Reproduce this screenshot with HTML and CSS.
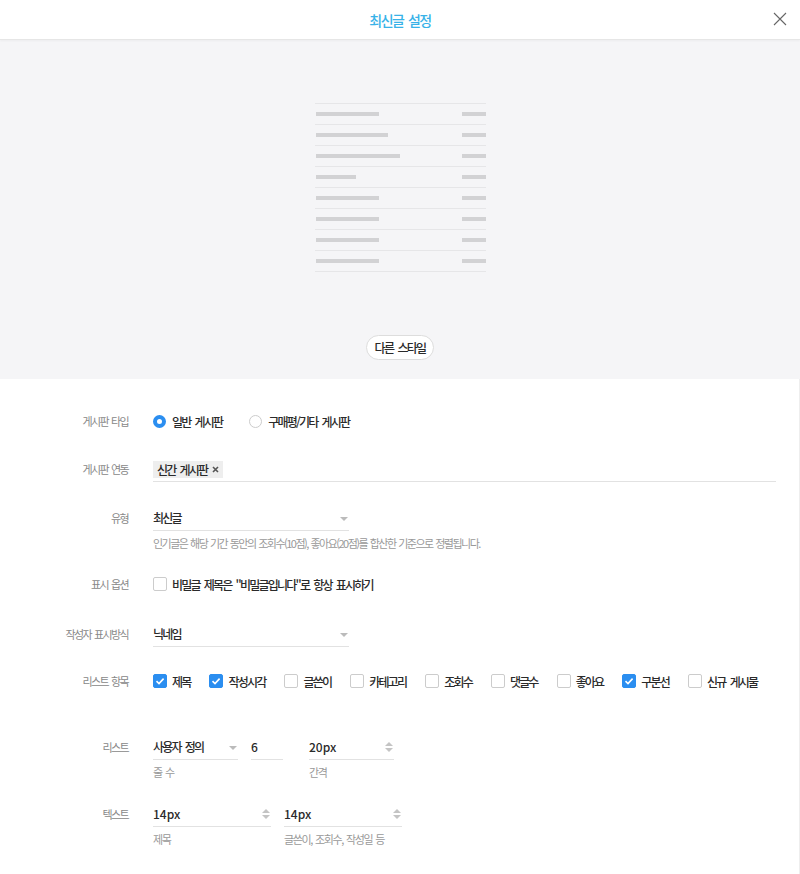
FILE: index.html
```html
<!DOCTYPE html>
<html lang="ko">
<head>
    <meta charset="UTF-8" />
    <meta name="viewport" content="width=device-width, initial-scale=1.0">
    <title>최신글 설정</title>
    <link rel="stylesheet" href="styles.css">
</head>
<body>
    <div class="modal">
        <header class="modal-header">
            <h1>최신글 설정</h1>
            <button class="close-btn" type="button" aria-label="닫기">
                <svg width="14" height="14" viewBox="0 0 14 14">
                    <path d="M1 1L13 13M13 1L1 13" stroke="#666" stroke-width="1.1" fill="none" />
                </svg>
            </button>
        </header>

        <section class="preview">
            <ul class="preview-list">
                <li><span class="bar" style="width: 63px"></span><span class="bar bar-right"></span></li>
                <li><span class="bar" style="width: 72px"></span><span class="bar bar-right"></span></li>
                <li><span class="bar" style="width: 84px"></span><span class="bar bar-right"></span></li>
                <li><span class="bar" style="width: 40px"></span><span class="bar bar-right"></span></li>
                <li><span class="bar" style="width: 63px"></span><span class="bar bar-right"></span></li>
                <li><span class="bar" style="width: 63px"></span><span class="bar bar-right"></span></li>
                <li><span class="bar" style="width: 63px"></span><span class="bar bar-right"></span></li>
                <li><span class="bar" style="width: 63px"></span><span class="bar bar-right"></span></li>
            </ul>
            <button class="style-btn" type="button">다른 스타일</button>
        </section>

        <form class="settings">
            <div class="row row-wide">
                <label class="row-label">게시판 타입</label>
                <div class="row-body options">
                    <label class="radio checked"><span class="radio-mark"></span>일반 게시판</label>
                    <label class="radio"><span class="radio-mark"></span>구매평/기타 게시판</label>
                </div>
            </div>

            <div class="row row-wide">
                <label class="row-label">게시판 연동</label>
                <div class="row-body">
                    <div class="field tag-field">
                        <span class="tag">신간 게시판
                            <svg class="tag-x" width="7" height="7" viewBox="0 0 7 7">
                                <path d="M1 1L6 6M6 1L1 6" stroke="#555" stroke-width="1.6" fill="none" />
                            </svg>
                        </span>
                    </div>
                </div>
            </div>

            <div class="row row-help">
                <label class="row-label">유형</label>
                <div class="row-body">
                    <div class="field select w-196">최신글<span class="caret"></span></div>
                    <p class="help">인기글은 해당 기간 동안의 조회수(10점), 좋아요(20점)를 합산한 기준으로 정렬됩니다.</p>
                </div>
            </div>

            <div class="row row-option">
                <label class="row-label">표시 옵션</label>
                <div class="row-body options">
                    <label class="check"><span class="check-mark"></span>비밀글 제목은 "비밀글입니다"로 항상 표시하기</label>
                </div>
            </div>

            <div class="row">
                <label class="row-label">작성자 표시방식</label>
                <div class="row-body">
                    <div class="field select w-196">닉네임<span class="caret"></span></div>
                </div>
            </div>

            <div class="row">
                <label class="row-label">리스트 항목</label>
                <div class="row-body options list-items">
                    <label class="check checked"><span class="check-mark"></span>제목</label>
                    <label class="check checked"><span class="check-mark"></span>작성시각</label>
                    <label class="check"><span class="check-mark"></span>글쓴이</label>
                    <label class="check"><span class="check-mark"></span>카테고리</label>
                    <label class="check"><span class="check-mark"></span>조회수</label>
                    <label class="check"><span class="check-mark"></span>댓글수</label>
                    <label class="check"><span class="check-mark"></span>좋아요</label>
                    <label class="check checked"><span class="check-mark"></span>구분선</label>
                    <label class="check"><span class="check-mark"></span>신규 게시물</label>
                </div>
            </div>

            <div class="row row-spaced">
                <label class="row-label">리스트</label>
                <div class="row-body groups">
                    <div class="group">
                        <div class="inline-fields">
                            <div class="field select w-85">사용자 정의<span class="caret"></span></div>
                            <div class="field num w-32">6</div>
                        </div>
                        <span class="caption">줄 수</span>
                    </div>
                    <div class="group">
                        <div class="field spin num w-85">20px<span class="spinner"></span></div>
                        <span class="caption">간격</span>
                    </div>
                </div>
            </div>

            <div class="row">
                <label class="row-label">텍스트</label>
                <div class="row-body groups tight">
                    <div class="group">
                        <div class="field spin num w-118">14px<span class="spinner"></span></div>
                        <span class="caption">제목</span>
                    </div>
                    <div class="group">
                        <div class="field spin num w-118">14px<span class="spinner"></span></div>
                        <span class="caption">글쓴이, 조회수, 작성일 등</span>
                    </div>
                </div>
            </div>
        </form>
    </div>
</body>
</html>
```

FILE: styles.css
```css
* {
    box-sizing: border-box;
}

body {
    margin: 0;
    font-family: "Noto Sans CJK KR", "Noto Sans", sans-serif;
    color: #2a2a2a;
    background-color: white;
}

.modal {
    width: 800px;
}

.modal-header {
    position: relative;
    height: 40px;
    border-bottom: 1px solid #e6e6e6;
    box-shadow: 0 1px 2px rgba(0,0,0,0.04);
    display: flex;
    align-items: center;
    justify-content: center;
}

.modal-header h1 {
    margin: 0;
    font-size: 14px;
    font-weight: 500;
    color: #38b2e8;
    letter-spacing: -1.5px;
    word-spacing: 2px;
}

.close-btn {
    position: absolute;
    right: 13px;
    top: 12px;
    padding: 0;
    border: none;
    background: none;
    width: 14px;
    height: 14px;
    cursor: pointer;
}

.close-btn svg {
    display: block;
}

/* 미리보기 */
.preview {
    background-color: #f5f5f7;
    height: 339px;
    padding-top: 63px;
    display: flex;
    flex-direction: column;
    align-items: center;
}

.preview-list {
    list-style: none;
    margin: 0 0 0 1px;
    padding: 0;
    width: 171px;
    border-top: 1px solid #e6e6e8;
}

.preview-list li {
    height: 21px;
    border-bottom: 1px solid #e6e6e8;
    display: flex;
    align-items: center;
    justify-content: space-between;
    padding-left: 1px;
}

.bar {
    display: block;
    height: 4px;
    background-color: #d2d2d4;
}

.bar-right {
    width: 24px;
}

.style-btn {
    margin-top: 63px;
    height: 25px;
    padding: 0 8px;
    border: 1px solid #ddd;
    border-radius: 13px;
    background-color: white;
    font-family: inherit;
    font-size: 12px;
    font-weight: 500;
    letter-spacing: -1.7px;
    word-spacing: 2.5px;
    color: #2a2a2a;
    cursor: pointer;
}

/* 설정 폼 */
.settings {
    padding: 30px 0 27px;
    border-right: 1px solid #eee;
}

.row {
    display: flex;
    align-items: flex-start;
    margin-bottom: 22px;
}

.row-wide {
    margin-bottom: 24px;
}

.row-help {
    margin-bottom: 21px;
}

.row-option {
    margin-bottom: 26px;
}

.row-spaced {
    margin-top: 42px;
}

.row-label {
    width: 128px;
    flex-shrink: 0;
    margin-right: 25px;
    text-align: right;
    font-size: 11px;
    line-height: 24px;
    color: #888;
    letter-spacing: -1.6px;
    word-spacing: 1.5px;
}

.row-body {
    flex: 1;
    font-size: 12px;
    font-weight: 500;
    letter-spacing: -1.8px;
    word-spacing: 2.5px;
}

.options {
    display: flex;
    align-items: center;
    height: 24px;
}

.radio, .check {
    display: flex;
    align-items: center;
    cursor: pointer;
}

.radio {
    margin-right: 27px;
}

.radio-mark {
    width: 13px;
    height: 13px;
    border: 1px solid #ccc;
    border-radius: 50%;
    margin-right: 6px;
    background-color: white;
}

.radio.checked .radio-mark {
    border: 4px solid #2b8ef0;
}

.check-mark {
    width: 14px;
    height: 14px;
    border: 1px solid #ccc;
    border-radius: 2px;
    margin-right: 5px;
    background-color: white;
}

.check.checked .check-mark {
    border-color: #2b8ef0;
    background: #2b8ef0 url("data:image/svg+xml,%3Csvg xmlns='http://www.w3.org/2000/svg' width='12' height='12' viewBox='0 0 12 12'%3E%3Cpath d='M2.5 6.2L5 8.6L9.6 3.6' stroke='white' stroke-width='1.6' fill='none'/%3E%3C/svg%3E") center no-repeat;
}

.list-items .check {
    margin-right: 19px;
}

.field {
    position: relative;
    height: 25px;
    line-height: 24px;
    border-bottom: 1px solid #e2e2e2;
}

.num {
    letter-spacing: 0;
}

.tag-field {
    width: 623px;
    display: flex;
    align-items: center;
}

.tag {
    display: inline-flex;
    align-items: center;
    height: 17px;
    padding: 0 4px;
    background-color: #eee;
    line-height: 17px;
}

.tag-x {
    margin-left: 5px;
}

.w-196 { width: 196px; }
.w-85 { width: 85px; }
.w-32 { width: 32px; }
.w-118 { width: 118px; }

.caret {
    position: absolute;
    right: 1px;
    top: 11px;
    border-left: 4px solid transparent;
    border-right: 4px solid transparent;
    border-top: 4px solid #bbb;
}

.spinner {
    position: absolute;
    right: 1px;
    top: 7px;
    width: 8px;
    height: 10px;
}

.spinner::before, .spinner::after {
    content: "";
    position: absolute;
    left: 0;
    border-left: 4px solid transparent;
    border-right: 4px solid transparent;
}

.spinner::before {
    top: 0;
    border-bottom: 4px solid #c4c4c4;
}

.spinner::after {
    bottom: 0;
    border-top: 4px solid #c4c4c4;
}

.help {
    margin: 4px 0 0;
    font-size: 11px;
    font-weight: normal;
    line-height: 16px;
    color: #999;
    letter-spacing: -1.5px;
    word-spacing: 1px;
}

.groups {
    display: flex;
    gap: 26px;
}

.groups.tight {
    gap: 13px;
}

.inline-fields {
    display: flex;
    gap: 13px;
}

.group {
    display: flex;
    flex-direction: column;
}

.caption {
    margin-top: 4px;
    font-size: 11px;
    font-weight: normal;
    line-height: 16px;
    color: #999;
    letter-spacing: -1.4px;
    word-spacing: 1.5px;
}
```
